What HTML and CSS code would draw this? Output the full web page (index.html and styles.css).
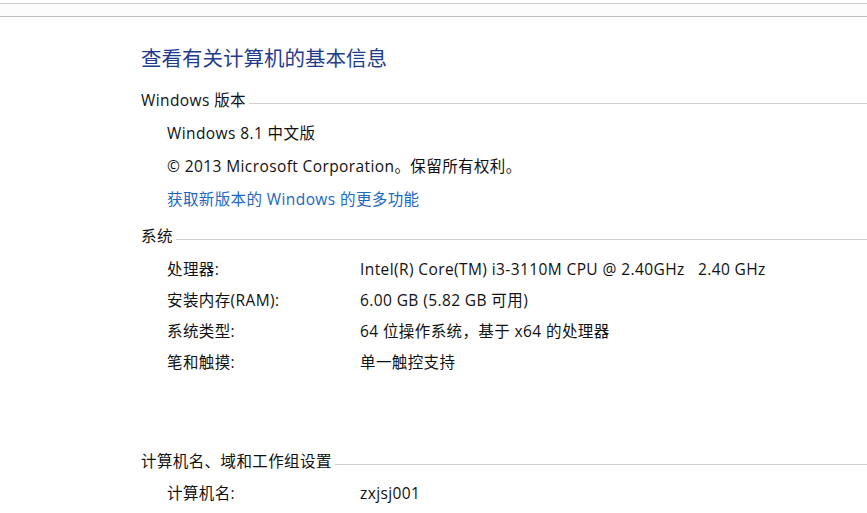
FILE: index.html
```html
<!DOCTYPE html>
<html lang="zh-CN">
<head>
<meta charset="utf-8">
<title>系统</title>
<link rel="stylesheet" href="styles.css">
</head>
<body>
<div class="topbar"></div>
<main class="page">
  <h1 class="title">查看有关计算机的基本信息</h1>

  <div class="section-head"><span>Windows 版本</span><i class="rule"></i></div>
  <div class="rows rows-edition">
    <div class="row">Windows 8.1 中文版</div>
    <div class="row">© 2013 Microsoft Corporation。保留所有权利。</div>
    <div class="row"><a class="link" href="#">获取新版本的 Windows 的更多功能</a></div>
  </div>

  <div class="section-head sh-system"><span>系统</span><i class="rule"></i></div>
  <div class="rows rows-system">
    <div class="row kv"><span class="k">处理器:</span><span class="v">Intel(R) Core(TM) i3-3110M CPU @ 2.40GHz&nbsp;&nbsp;&nbsp;2.40 GHz</span></div>
    <div class="row kv"><span class="k">安装内存(RAM):</span><span class="v">6.00 GB (5.82 GB 可用)</span></div>
    <div class="row kv"><span class="k">系统类型:</span><span class="v">64 位操作系统，基于 x64 的处理器</span></div>
    <div class="row kv"><span class="k">笔和触摸:</span><span class="v">单一触控支持</span></div>
  </div>

  <div class="section-head sh-name"><span>计算机名、域和工作组设置</span><i class="rule"></i></div>
  <div class="rows rows-name">
    <div class="row kv"><span class="k">计算机名:</span><span class="v">zxjsj001</span></div>
  </div>
</main>
</body>
</html>
```

FILE: styles.css
```css
* { box-sizing: border-box; }
html, body { margin: 0; padding: 0; background: #fff; }
body {
  font-family: "Open Sans", "Noto Sans CJK SC", sans-serif;
  font-size: 15.5px;
  letter-spacing: 0.4px;
  color: #111;
  overflow: hidden;
}
.topbar {
  margin-top: 3px;
  height: 14px;
  border-top: 1px solid #cfcfcf;
  border-bottom: 1px solid #bdbdbd;
  background: #fcfcfc;
}
.page { padding-left: 141px; }
.title {
  margin: 26px 0 0;
  font-weight: normal;
  font-size: 20.5px;
  letter-spacing: 0;
  line-height: 28px;
  color: #1f3c8c;
  font-family: "Noto Sans CJK SC", sans-serif;
}
.section-head {
  display: flex;
  align-items: center;
  height: 20px;
  line-height: 20px;
  margin-top: 19px;
  white-space: nowrap;
}
.section-head .rule {
  flex: 1;
  height: 1px;
  background: #d0d0d0;
  margin: 6px 0 0 3px;
}
.sh-system { margin-top: 10px; }
.sh-name { margin-top: 73px; }
.rows { padding-left: 26px; }
.rows-edition { margin-top: 7px; }
.rows-edition .row { height: 33px; line-height: 33px; }
.rows-system { margin-top: 8px; }
.rows-system .row { height: 31px; line-height: 31px; }
.rows-name { margin-top: 7px; }
.rows-name .row { height: 31px; line-height: 31px; }
.row { white-space: nowrap; }
.kv { display: flex; }
.k { width: 193px; flex: none; }
.v { flex: none; }
.link { color: #2067c2; text-decoration: none; }
```
